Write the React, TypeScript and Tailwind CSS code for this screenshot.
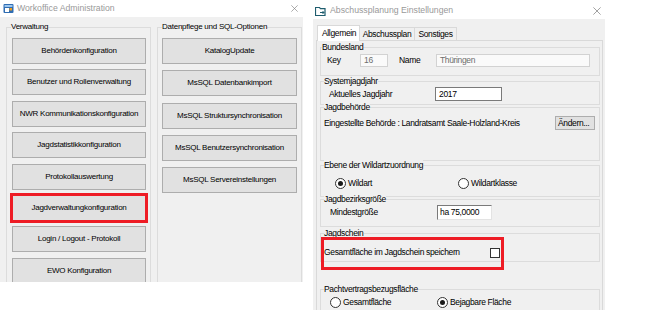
import clsx from "clsx";
import type { ReactNode } from "react";

const leftFont = "font-['Liberation_Sans',Arial,sans-serif] text-[8px] tracking-[-0.25px]";
const rightFont = "font-['Liberation_Sans',Arial,sans-serif] text-[8.5px] tracking-[-0.35px]";
const titleFont = "font-['Liberation_Sans',Arial,sans-serif] text-[8.7px]";

const adminButtons = [
  "Behördenkonfiguration",
  "Benutzer und Rollenverwaltung",
  "NWR Kommunikationskonfiguration",
  "Jagdstatistikkonfiguration",
  "Protokollauswertung",
  "Jagdverwaltungkonfiguration",
  "Login / Logout - Protokoll",
  "EWO Konfiguration",
];

const sqlButtons = [
  "KatalogUpdate",
  "MsSQL Datenbankimport",
  "MsSQL Struktursynchronisation",
  "MsSQL Benutzersynchronisation",
  "MsSQL Servereinstellungen",
];

function CloseIcon({ size }: { size: number }) {
  return (
    <svg width={size} height={size} viewBox="0 0 10 10" className="shrink-0">
      <path d="M0.5 0.5L9.5 9.5M9.5 0.5L0.5 9.5" stroke="#7d7d7d" strokeWidth="0.9" />
    </svg>
  );
}

function AdminIcon() {
  return (
    <svg width="11" height="11" viewBox="0 0 11 11" className="shrink-0">
      <rect x="0.5" y="1" width="10" height="9" rx="1" fill="#2f6db3" />
      <rect x="1.5" y="2" width="8" height="2" fill="#9cc6ee" />
      <rect x="2" y="5" width="4" height="4" fill="#ffffff" />
      <rect x="6.5" y="5" width="2.5" height="2.5" fill="#f0a020" />
    </svg>
  );
}

function PlanIcon() {
  return (
    <svg width="11" height="10" viewBox="0 0 11 10" className="shrink-0">
      <path d="M0.5 1.5h4l1 1.2h4.5v6.8h-9.5z" fill="none" stroke="#1f5d6e" strokeWidth="1.2" />
      <path d="M5 6.5h4M7.5 5l1.5 1.5-1.5 1.5" stroke="#1f5d6e" strokeWidth="1" fill="none" />
    </svg>
  );
}

// group box: the caption sits on the top border line, like a WinForms GroupBox
function Group({
  title,
  className,
  labelClass,
  children,
}: {
  title: string;
  className?: string;
  labelClass?: string;
  children?: ReactNode;
}) {
  return (
    <div className={clsx("border border-[#dcdcdc] shrink-0", className)}>
      <div className={clsx("-mt-[6px] h-[10px] leading-[10px] w-fit bg-[#f0f0f0] whitespace-nowrap", labelClass)}>
        {title}
      </div>
      {children}
    </div>
  );
}

function WinButton({ label, marked }: { label: string; marked?: boolean }) {
  return (
    <div
      className={clsx(
        "h-[26px] shrink-0 flex items-center justify-center bg-[#e1e1e1] border border-[#adadad] text-black whitespace-nowrap",
        marked && "outline-solid outline-[3px] outline-[#ee1c25] outline-offset-[-1px]"
      )}
    >
      {label}
    </div>
  );
}

function Radio({ checked, label }: { checked?: boolean; label: string }) {
  return (
    <div className="flex items-center gap-[2px]">
      <span className="w-[11px] h-[11px] rounded-full border border-[#333333] bg-white flex items-center justify-center">
        {checked && <span className="w-[5px] h-[5px] rounded-full bg-[#1a1a1a]" />}
      </span>
      <span>{label}</span>
    </div>
  );
}

function AdminWindow() {
  return (
    <div className="w-[303px] h-[282px] bg-[#f0f0f0] flex flex-col overflow-hidden shrink-0">
      <div className="h-[17px] shrink-0 bg-white flex items-center pl-[3px] pr-[5px]">
        <AdminIcon />
        <span className={clsx(titleFont, "ml-[3px] text-[#999999]")}>Workoffice Administration</span>
        <span className="ml-auto">
          <CloseIcon size={7} />
        </span>
      </div>
      <div className={clsx(leftFont, "flex gap-[6px] pl-[6px] pt-[10px]")}>
        <Group title="Verwaltung" className="w-[145px] h-[270px]" labelClass="ml-[4px]">
          <div className="flex flex-col gap-[5.4px] pt-[6px] pl-[5px] pr-[4px]">
            {adminButtons.map((b) => (
              <WinButton key={b} label={b} marked={b === "Jagdverwaltungkonfiguration"} />
            ))}
          </div>
        </Group>
        <Group title="Datenpflege und SQL-Optionen" className="w-[145px] h-[270px]" labelClass="ml-[4px]">
          <div className="flex flex-col gap-[6.25px] pt-[6px] pl-[4px] pr-[4px]">
            {sqlButtons.map((b) => (
              <WinButton key={b} label={b} />
            ))}
          </div>
        </Group>
      </div>
    </div>
  );
}

function PlanWindow() {
  return (
    <div className="w-[292px] h-[310px] flex flex-col overflow-hidden shrink-0">
      <div className="h-[19px] shrink-0 bg-white flex items-center pl-[2px] pr-[4px] pt-[3px]">
        <PlanIcon />
        <span className={clsx(titleFont, "ml-[4px] text-[#999999]")}>Abschussplanung Einstellungen</span>
        <span className="ml-auto">
          <CloseIcon size={8} />
        </span>
      </div>
      <div className={clsx(rightFont, "flex-1 bg-[#f0f0f0] pt-[6px] pl-[3px] pr-[2px] text-black")}>
        <div className="flex items-end h-[15px] pl-[1px]">
          <div className="w-[43px] h-[16px] -mb-px relative bg-white border border-b-0 border-[#d9d9d9] flex items-center pl-[4px]">
            Allgemein
          </div>
          <div className="w-[55px] h-[13px] border border-l-0 border-b-0 border-[#d9d9d9] flex items-center justify-center">
            Abschussplan
          </div>
          <div className="w-[42px] h-[13px] border border-l-0 border-b-0 border-[#d9d9d9] flex items-center justify-center">
            Sonstiges
          </div>
        </div>
        <div className="h-[280px] border border-[#d9d9d9] bg-[#f0f0f0] flex flex-col pl-[3px] pr-[2px]">
          <Group title="Bundesland" className="h-[29px] mt-[6px]" labelClass="ml-[1px]">
            <div className="flex items-center h-[13px] mt-[2px] pl-[6px]">
              <span className="w-[33px]">Key</span>
              <div className="w-[28px] h-[13px] bg-[#fafafa] border border-[#d2d2d2] text-[#6d6d6d] flex items-center pl-[3px]">
                16
              </div>
              <span className="ml-[11px] w-[37px]">Name</span>
              <div className="w-[154px] h-[13px] bg-[#fafafa] border border-[#d2d2d2] text-[#6d6d6d] flex items-center pl-[3px]">
                Thüringen
              </div>
            </div>
          </Group>
          <Group title="Systemjagdjahr" className="h-[24px] mt-[5px]" labelClass="ml-[3px]">
            <div className="flex items-center mt-[1px] pl-[8px]">
              <span className="w-[106px]">Aktuelles Jagdjahr</span>
              <div className="w-[67px] h-[14px] bg-white border border-[#7a7a7a] flex items-center pl-[3px]">
                2017
              </div>
            </div>
          </Group>
          <Group title="Jagdbehörde" className="h-[54px] mt-[2px]" labelClass="ml-[3px]">
            <div className="flex items-center justify-between h-[14px] mt-[4px] pl-[3px] pr-[4px]">
              <span>Eingestellte Behörde : Landratsamt Saale-Holzland-Kreis</span>
              <div className="w-[40px] h-[14px] bg-[#e1e1e1] border border-[#adadad] flex items-center pl-[2px]">
                Ändern...
              </div>
            </div>
          </Group>
          <Group title="Ebene der Wildartzuordnung" className="h-[32px] mt-[4px]" labelClass="ml-[3px]">
            <div className="flex items-center h-[12px] mt-[7px] pl-[14px]">
              <div className="w-[123px]">
                <Radio checked label="Wildart" />
              </div>
              <Radio label="Wildartklasse" />
            </div>
          </Group>
          <Group title="Jagdbezirksgröße" className="h-[28px] mt-[2px]" labelClass="ml-[3px]">
            <div className="flex items-center mt-[1px] pl-[9px]">
              <span className="w-[107px]">Mindestgröße</span>
              <div className="w-[55px] h-[15px] bg-white border border-[#7a7a7a] border-r-[#e3e3e3] border-b-[#e3e3e3] flex items-center pl-[2px]">
                ha 75,0000
              </div>
            </div>
          </Group>
          <Group title="Jagdschein" className="h-[29px] mt-[6px]" labelClass="ml-[3px]">
            <div className="w-[177px] h-[27px] mt-[2px] ml-[3px] flex items-center justify-between pb-[2px] outline-solid outline-[3px] outline-[#ee1c25]">
              <span>Gesamtfläche im Jagdschein speichern</span>
              <span className="w-[10px] h-[10px] bg-white border border-[#333333] mr-[1px]" />
            </div>
          </Group>
          <Group title="Pachtvertragsbezugsfläche" className="h-[40px] mt-[27px]" labelClass="ml-[3px]">
            <div className="flex items-center h-[12px] mt-[2px] pl-[9px]">
              <div className="w-[107px]">
                <Radio label="Gesamtfläche" />
              </div>
              <Radio checked label="Bejagbare Fläche" />
            </div>
          </Group>
        </div>
      </div>
    </div>
  );
}

export default function App() {
  return (
    <div className="w-[646px] h-[310px] bg-white flex items-start overflow-hidden">
      <AdminWindow />
      <div className="ml-[10px]">
        <PlanWindow />
      </div>
    </div>
  );
}
